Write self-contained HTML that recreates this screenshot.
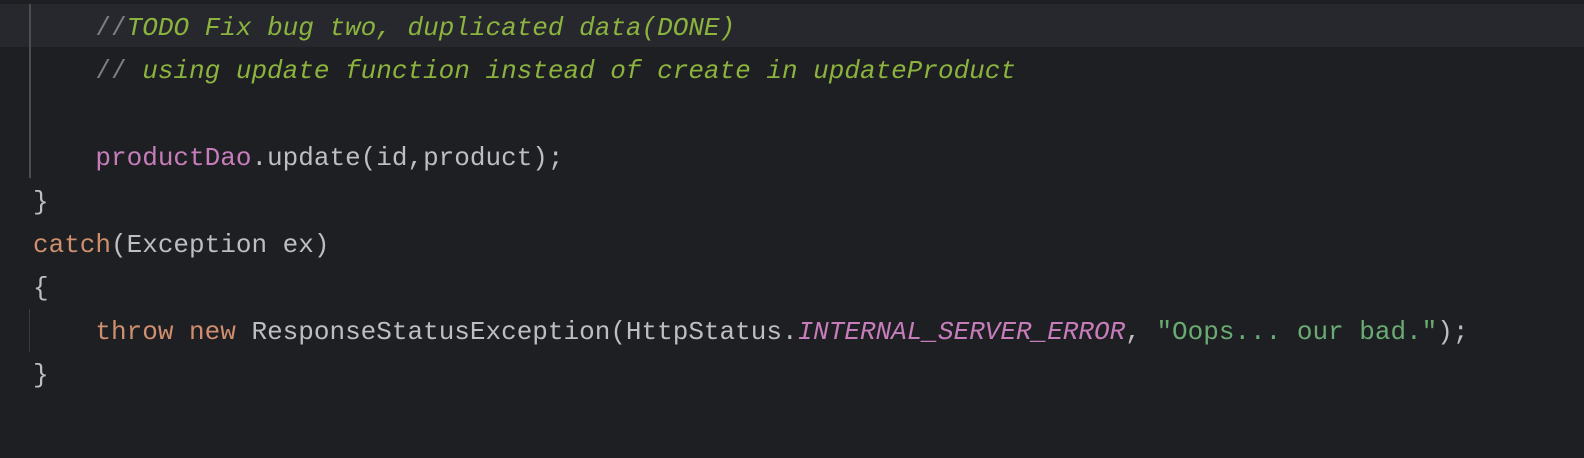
<!DOCTYPE html>
<html><head><style>
html,body{margin:0;padding:0;background:#1e1f22;width:1584px;height:458px;overflow:hidden}
.hl{position:absolute;left:0;top:4px;width:1584px;height:43px;background:#26282e}
.g1{position:absolute;left:29px;top:4px;width:2px;height:174px;background:#4b4d51}
.g2{position:absolute;left:29px;top:309px;width:1px;height:43px;background:#393b40}
.code{position:absolute;left:33px;top:7px;font-family:"Liberation Mono",monospace;font-size:26px;line-height:43.4px;color:#bcbec4;white-space:pre}
.c{color:#7a7e85}.t{color:#8bb33d;font-style:italic}.p{color:#c77dbb}.k{color:#cf8e6d}.s{color:#6aab73}.i{color:#c77dbb;font-style:italic}
</style></head><body>
<div class="hl"></div><div class="g1"></div><div class="g2"></div>
<div class="code">    <span class="c">//</span><span class="t">TODO Fix bug two, duplicated data(DONE)</span>
    <span class="c">// </span><span class="t">using update function instead of create in updateProduct</span>

    <span class="p">productDao</span>.update(id,product);
}
<span class="k">catch</span>(Exception ex)
{
    <span class="k">throw new</span> ResponseStatusException(HttpStatus.<span class="i">INTERNAL_SERVER_ERROR</span>, <span class="s">"Oops... our bad."</span>);
}</div>
</body></html>
